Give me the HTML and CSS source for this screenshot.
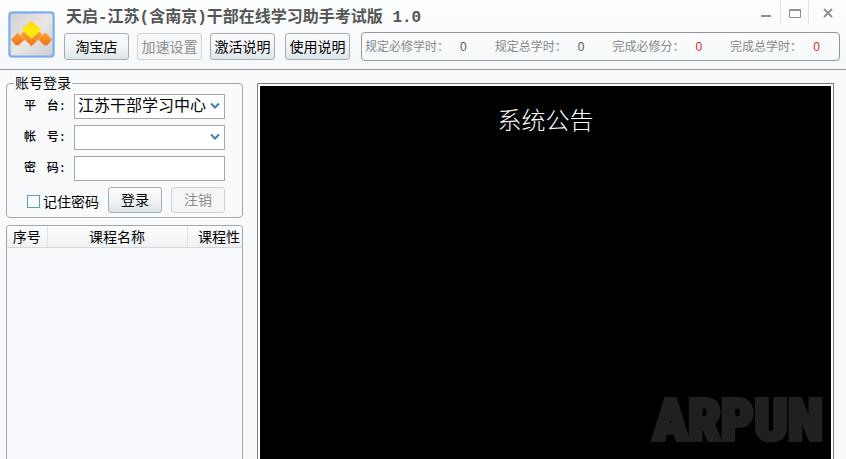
FILE: index.html
```html
<!DOCTYPE html>
<html lang="zh-CN">
<head>
<meta charset="utf-8">
<title>天启-江苏(含南京)干部在线学习助手考试版 1.0</title>
<link rel="stylesheet" href="styles.css">
</head>
<body>
<div class="window">
  <header class="top">
    <svg class="logo" viewBox="0 0 50 50" aria-hidden="true">
      <defs>
        <linearGradient id="plate" x1="0" y1="0" x2="1" y2="1"><stop offset="0" stop-color="#cfcfd1"/><stop offset=".5" stop-color="#e9e7e4"/><stop offset="1" stop-color="#cccdd0"/></linearGradient>
        <linearGradient id="fire" x1="0" y1="0" x2="0" y2="1"><stop offset="0" stop-color="#f9a62c"/><stop offset="1" stop-color="#f2701c"/></linearGradient>
        <linearGradient id="sun" x1="0" y1="0" x2="0" y2="1"><stop offset="0" stop-color="#fcd21a"/><stop offset=".6" stop-color="#fff000"/><stop offset="1" stop-color="#ffd51c"/></linearGradient>
      </defs>
      <rect x="1" y="1" width="48" height="48" rx="4" fill="#d4e6fb"/>
      <rect x="2.5" y="2.5" width="45" height="45" rx="3" fill="url(#plate)" stroke="#79aaf0" stroke-width="2"/>
      <path d="M4 30l7-7 7 7-6 6h-3zM46 30l-7-7-7 7 6 6h3z" fill="url(#fire)"/>
      <path d="M14 25l3-3 8 7 8-7 3 3-5 6-6 6-6-6z" fill="url(#fire)"/>
      <path d="M25 11l10 9-10 9-10-9z" fill="url(#sun)"/>
    </svg>
    <div class="top-main">
      <div class="title-row">
        <h1>天启-江苏(含南京)干部在线学习助手考试版 1.0</h1>
        <div class="caption">
          <button class="cap" aria-label="最小化"><svg viewBox="0 0 12 12"><path d="M1 9H11" stroke-width="2"/></svg></button>
          <button class="cap" aria-label="最大化"><svg viewBox="0 0 12 12"><path d="M.5 2.500H11.500V10.500H.5zM.5 3.500H11.500"/></svg></button>
          <button class="cap" aria-label="关闭"><svg viewBox="0 0 12 12"><path d="M2 2l8 8M10 2l-8 8" stroke-width="2"/></svg></button>
        </div>
      </div>
      <div class="tool-row">
        <button class="btn">淘宝店</button>
        <button class="btn" disabled>加速设置</button>
        <button class="btn">激活说明</button>
        <button class="btn wide-gap">使用说明</button>
        <dl class="stats">
          <div><dt>规定必修学时：</dt><dd>0</dd></div>
          <div><dt>规定总学时：</dt><dd>0</dd></div>
          <div><dt>完成必修分：</dt><dd class="done">0</dd></div>
          <div><dt>完成总学时：</dt><dd class="done">0</dd></div>
        </dl>
      </div>
    </div>
  </header>
  <main class="content">
    <aside class="side">
      <form class="login">
        <h2>账号登录</h2>
        <div class="field">
          <label for="platform"><span>平</span><span>台:</span></label>
          <div class="combo">
            <select id="platform"><option>江苏干部学习中心</option></select>
            <svg class="arrow" viewBox="0 0 10 7"><path d="M1 1.500L5 5.500 9 1.500"/></svg>
          </div>
        </div>
        <div class="field">
          <label for="account"><span>帐</span><span>号:</span></label>
          <div class="combo">
            <select id="account"><option></option></select>
            <svg class="arrow" viewBox="0 0 10 7"><path d="M1 1.500L5 5.500 9 1.500"/></svg>
          </div>
        </div>
        <div class="field">
          <label for="password"><span>密</span><span>码:</span></label>
          <input id="password" type="password">
        </div>
        <div class="actions">
          <label class="remember"><input type="checkbox">记住密码</label>
          <button type="button" class="btn small">登录</button>
          <button type="button" class="btn small" disabled>注销</button>
        </div>
      </form>
      <div class="courses">
        <table>
          <thead><tr><th class="c-no">序号</th><th class="c-name">课程名称</th><th class="c-kind">课程性</th></tr></thead>
          <tbody></tbody>
        </table>
      </div>
    </aside>
    <section class="notice">
      <h2>系统公告</h2>
      <div class="mark">ARPUN</div>
    </section>
  </main>
</div>
</body>
</html>
```
FILE: styles.css
```css
* { box-sizing: border-box; }

body {
  margin: 0;
  background: #f8fafc;
  color: #000;
  font: 14px/20px "Liberation Sans", "Noto Sans CJK SC", sans-serif;
}

h1, h2, dl, dd { margin: 0; }

.window {
  display: flex;
  flex-direction: column;
  height: 100vh;
  overflow: hidden;
}

.top {
  display: flex;
  gap: 8px;
  height: 70px;
  flex: none;
  padding: 0 6px 0 7px;
  border-bottom: 1px solid #94979b;
  background: linear-gradient(#fdfeff, #f5f8fa);
}

.logo {
  width: 49px;
  height: 49px;
  margin-top: 10px;
  flex: none;
}

.top-main { flex: 1; min-width: 0; }

.title-row {
  display: flex;
  justify-content: space-between;
  height: 32px;
}

h1 {
  padding: 8px 2px 0;
  color: #555;
  font: bold 16px/20px "Liberation Mono", "Noto Sans CJK SC", monospace;
  white-space: nowrap;
}

.caption { display: flex; height: 24px; margin-right: -6px; }

.cap {
  width: 28px;
  padding: 0;
  border: 0;
  background: none;
}

.cap + .cap { border-left: 1px solid #dde2e7; }
.cap:last-child { width: 38px; }

.cap svg {
  display: block;
  width: 12px;
  height: 12px;
  margin: 1px auto 0;
  fill: none;
  stroke: #8d9196;
}

.tool-row { display: flex; gap: 8px; align-items: center; }

.btn {
  width: 65px;
  height: 27px;
  flex: none;
  padding: 0;
  border: 1px solid #a6abb1;
  border-radius: 3px;
  background: linear-gradient(#f9fafb, #f2f5f7 50%, #dce5ea);
  color: #000;
  font: inherit;
  line-height: 18px;
  white-space: nowrap;
}

.btn:disabled {
  border-color: #cfd2d5;
  background: #f5f6f7;
  color: #8b8e91;
}

.btn.small { width: 54px; height: 26px; }
.wide-gap { margin: 0 3px 0 2px; }

.stats {
  display: flex;
  flex: 1;
  gap: 28px;
  height: 29px;
  align-items: center;
  padding: 0 3px;
  border: 1px solid #94979b;
  border-radius: 4px;
  color: #85888b;
  font-size: 12px;
  white-space: nowrap;
}

.stats div { display: flex; gap: 11px; }
.stats dd { color: #555; }
.stats .done { color: #d22a2a; }

.content {
  display: flex;
  flex: 1;
  gap: 14px;
  min-height: 0;
  padding: 13px 12px 0 6px;
}

.side {
  display: flex;
  flex-direction: column;
  gap: 7px;
  width: 237px;
  flex: none;
}

.login {
  display: flex;
  flex-direction: column;
  gap: 6px;
  padding: 0 16px 4px;
  border: 1px solid #a3a6aa;
  border-radius: 4px;
}

.login h2 {
  align-self: flex-start;
  height: 20px;
  margin: -11px 0 -5px -9px;
  padding: 0 1px;
  background: #f9fbfd;
  font: inherit;
}

.field { display: flex; gap: 8px; align-items: center; }

.field label {
  display: flex;
  justify-content: space-between;
  width: 43px;
  padding-left: 1px;
  font: 500 12px/20px "Liberation Mono", "Noto Sans CJK SC", monospace;
}

.combo { position: relative; }

.combo select, .field > input {
  display: block;
  width: 151px;
  height: 25px;
  padding: 0 2px 2px 3px;
  border: 1px solid #a3a6aa;
  border-radius: 0;
  background: #fff;
  color: #000;
  font: 16px/20px "Liberation Sans", "Noto Sans CJK SC", sans-serif;
  appearance: none;
}

.arrow {
  position: absolute;
  top: 8px;
  right: 5px;
  width: 10px;
  height: 7px;
  fill: none;
  stroke: #3c83b5;
  stroke-width: 2;
  pointer-events: none;
}

.actions { display: flex; gap: 9px; padding-left: 4px; }

.remember {
  display: flex;
  gap: 3px;
  align-items: center;
  padding-top: 3px;
  white-space: nowrap;
}

.remember input {
  width: 13px;
  height: 13px;
  margin: 0;
  border: 1px solid #5a9dc3;
  background: #fbfdff;
  appearance: none;
}

.courses {
  flex: 1;
  overflow: hidden;
  border: 1px solid #a3a6aa;
  border-bottom: 0;
  border-radius: 4px 4px 0 0;
  background: #f7f9fc;
}

table { width: 100%; border-collapse: collapse; table-layout: fixed; }

th {
  height: 21px;
  padding: 2px 0 0;
  border-bottom: 1px solid #d5d8db;
  background: linear-gradient(#fcfdfe, #eff1f3);
  font-weight: normal;
  line-height: 18px;
  white-space: nowrap;
}

th + th { border-left: 1px solid #dfe2e5; }
.c-no { width: 40px; }
.c-name { width: 140px; }
.c-kind { padding-right: 2px; text-align: right; }

.notice {
  display: flex;
  flex: 1;
  flex-direction: column;
  justify-content: space-between;
  min-width: 0;
  margin-bottom: -3px;
  padding-top: 22px;
  border: 1px solid #7d8083;
  background: #000;
  box-shadow: inset 0 0 0 2px #fff;
}

.notice h2 {
  color: #fff;
  font-size: 24px;
  font-weight: 300;
  line-height: 30px;
  text-align: center;
}

.mark {
  align-self: flex-end;
  padding-right: 10px;
  color: #202020;
  font: 900 58px/82px "Roboto Condensed", "Noto Sans CJK SC", sans-serif;
  -webkit-text-stroke: 4px #202020;
}
```
